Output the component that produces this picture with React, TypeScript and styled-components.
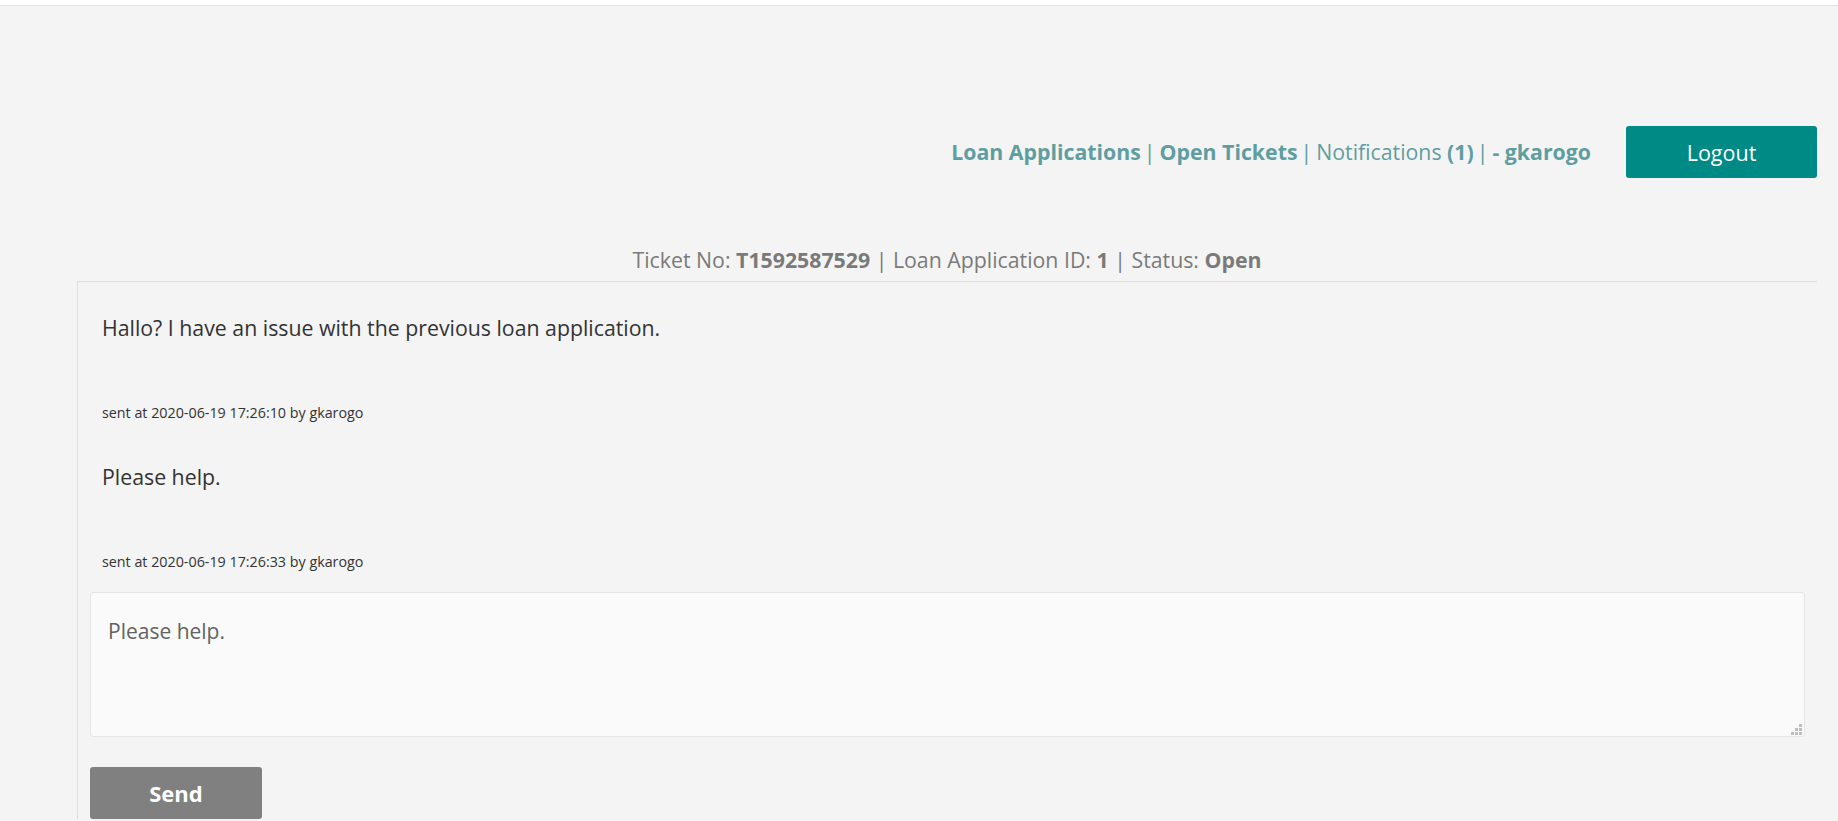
import React from "react";
import styled, { createGlobalStyle } from "styled-components";

const GlobalStyle = createGlobalStyle`
  html, body {
    margin: 0;
    padding: 0;
    background: #f4f4f4;
    overflow: hidden;
  }
  body {
    font-family: "Open Sans", "Segoe UI", sans-serif;
  }
  * { box-sizing: border-box; }
`;

const Page = styled.div`
  min-height: 100vh;
  background: #f4f4f4;
`;

const TopStrip = styled.div`
  height: 6px;
  background: #ffffff;
  border-bottom: 1px solid #e3e3e3;
`;

const Main = styled.main`
  padding: 0 21px 0 77px;
`;

const Header = styled.header`
  display: flex;
  justify-content: flex-end;
  align-items: center;
  gap: 35px;
  margin-top: 120px;
  height: 52px;
`;

const Nav = styled.nav`
  display: flex;
  align-items: center;
  font-size: 21.3px;
  line-height: 28px;
  color: #5f9ea0;
  white-space: pre;
`;

const NavLink = styled.a<{ $bold?: boolean }>`
  color: #5f9ea0;
  text-decoration: none;
  font-weight: ${(p) => (p.$bold ? 700 : 400)};
`;

const Strong = styled.b`
  font-weight: 700;
`;

const Sep = styled.span`
  color: #5f9ea0;
  margin: 0 4px 0 3px;
`;

const Button = styled.button<{ $variant: "primary" | "muted" }>`
  border: none;
  border-radius: 3px;
  height: 52px;
  color: #ffffff;
  font-family: "Open Sans", "Segoe UI", sans-serif;
  font-size: ${(p) => (p.$variant === "primary" ? "21.5px" : "22px")};
  cursor: pointer;
  padding: 0;
  background: ${(p) => (p.$variant === "primary" ? "#008a85" : "#808080")};
  font-weight: ${(p) => (p.$variant === "primary" ? 400 : 700)};
  width: ${(p) => (p.$variant === "primary" ? "191px" : "172px")};
`;

const TicketInfo = styled.div`
  margin-top: 68px;
  text-align: center;
  font-size: 21.3px;
  line-height: 28px;
  color: #7a7a7a;
`;

const Card = styled.section`
  margin-top: 7px;
  border-top: 1px solid #dedede;
  border-left: 1px solid #dedede;
  padding: 0 12px;
`;

const MessageList = styled.div`
  display: flex;
  flex-direction: column;
  gap: 40px;
  padding: 32px 0 0 12px;
`;

const Message = styled.article`
  display: flex;
  flex-direction: column;
  gap: 61px;
`;

const MessageText = styled.p`
  margin: 0;
  font-size: 21.3px;
  line-height: 28px;
  color: #333333;
`;

const MessageMeta = styled.div`
  font-size: 14.3px;
  line-height: 20px;
  color: #333333;
`;

const ReplyForm = styled.form`
  display: flex;
  flex-direction: column;
  align-items: flex-start;
  gap: 30px;
  margin-top: 20px;
`;

const TextareaWrap = styled.div`
  position: relative;
  width: 100%;
`;

const Textarea = styled.textarea`
  display: block;
  width: 100%;
  height: 145px;
  resize: none;
  background: #fafafa;
  border: 1px solid #e6e6e6;
  border-radius: 3px;
  padding: 24px 17px;
  font-family: "Open Sans", "Segoe UI", sans-serif;
  font-size: 21px;
  line-height: 28px;
  color: #636363;
  outline: none;
`;

const Grip = styled.svg`
  position: absolute;
  right: 3px;
  bottom: 2px;
  width: 11px;
  height: 11px;
  pointer-events: none;
`;

const ResizeGrip = () => (
  <Grip viewBox="0 0 11 11">
    <g fill="#bdbdbd">
      <rect x="8" y="0" width="3" height="3" />
      <rect x="4" y="4" width="3" height="3" />
      <rect x="8" y="4" width="3" height="3" />
      <rect x="0" y="8" width="3" height="3" />
      <rect x="4" y="8" width="3" height="3" />
      <rect x="8" y="8" width="3" height="3" />
    </g>
  </Grip>
);

const messages = [
  {
    text: "Hallo? I have an issue with the previous loan application.",
    meta: "sent at 2020-06-19 17:26:10 by gkarogo",
  },
  {
    text: "Please help.",
    meta: "sent at 2020-06-19 17:26:33 by gkarogo",
  },
];

export default function App() {
  return (
    <>
      <GlobalStyle />
      <Page>
        <TopStrip />
        <Main>
          <Header>
            <Nav>
              <NavLink $bold href="#">Loan Applications</NavLink>
              <Sep>|</Sep>
              <NavLink $bold href="#">Open Tickets</NavLink>
              <Sep>|</Sep>
              <NavLink href="#">
                Notifications <Strong>(1)</Strong>
              </NavLink>
              <Sep>|</Sep>
              <NavLink $bold href="#">- gkarogo</NavLink>
            </Nav>
            <Button $variant="primary" type="button">Logout</Button>
          </Header>
          <TicketInfo>
            Ticket No: <Strong>T1592587529</Strong> | Loan Application ID: <Strong>1</Strong> | Status: <Strong>Open</Strong>
          </TicketInfo>
          <Card>
            <MessageList>
              {messages.map((m) => (
                <Message key={m.meta}>
                  <MessageText>{m.text}</MessageText>
                  <MessageMeta>{m.meta}</MessageMeta>
                </Message>
              ))}
            </MessageList>
            <ReplyForm onSubmit={(e) => e.preventDefault()}>
              <TextareaWrap>
                <Textarea defaultValue="Please help." />
                <ResizeGrip />
              </TextareaWrap>
              <Button $variant="muted" type="submit">Send</Button>
            </ReplyForm>
          </Card>
        </Main>
      </Page>
    </>
  );
}
